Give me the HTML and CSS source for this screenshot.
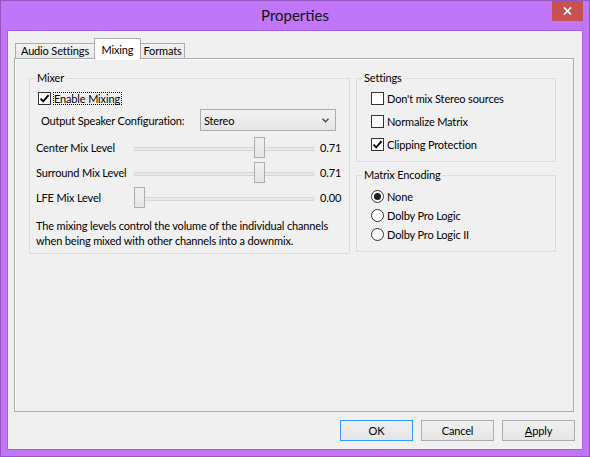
FILE: index.html
```html
<!DOCTYPE html>
<html>
<head>
<meta charset="utf-8">
<link rel="stylesheet" href="styles.css">
</head>
<body>
<div class="window">
  <div class="titlebar">
    <span></span>
    <div class="title">Properties</div>
    <div class="close">
      <svg width="9" height="8" viewBox="0 0 9 8"><path d="M1 0.5 L8 7.5 M8 0.5 L1 7.5" stroke="#fff" stroke-width="1.7" fill="none"/></svg>
    </div>
  </div>
  <div class="client">
    <div class="tabs">
      <div class="tab tab-audio">Audio Settings</div>
      <div class="tab tab-mixing selected">Mixing</div>
      <div class="tab tab-formats">Formats</div>
    </div>
    <div class="panel">
      <div class="group mixer">
        <div class="caption">Mixer</div>
        <div class="check-row enable">
          <span class="box"><svg width="11" height="11" viewBox="0 0 11 11"><path d="M1.6 5.6 L4.2 8.3 L9.6 2.2" stroke="#000" stroke-width="1.9" fill="none"/></svg></span>
          <span class="focus">Enable Mixing</span>
        </div>
        <div class="combo-row">
          <span class="combo-label">Output Speaker Configuration:</span>
          <div class="combo">
            <span>Stereo</span>
            <svg width="7" height="5" viewBox="0 0 7 5"><path d="M0.5 0.8 L3.5 3.8 L6.5 0.8" stroke="#444" stroke-width="1.3" fill="none"/></svg>
          </div>
        </div>
        <div class="slider-row first">
          <span class="slider-label">Center Mix Level</span>
          <div class="slider"><div class="track"></div><div class="thumb" style="--v:0.71"></div></div>
          <span class="value">0.71</span>
        </div>
        <div class="slider-row">
          <span class="slider-label">Surround Mix Level</span>
          <div class="slider"><div class="track"></div><div class="thumb" style="--v:0.71"></div></div>
          <span class="value">0.71</span>
        </div>
        <div class="slider-row">
          <span class="slider-label">LFE Mix Level</span>
          <div class="slider"><div class="track"></div><div class="thumb" style="--v:0"></div></div>
          <span class="value">0.00</span>
        </div>
        <p class="note">The mixing levels control the volume of the individual channels<br>when being mixed with other channels into a downmix.</p>
      </div>
      <div class="side">
        <div class="group settings">
          <div class="caption">Settings</div>
          <div class="check-row"><span class="box"></span><span>Don't mix Stereo sources</span></div>
          <div class="check-row"><span class="box"></span><span>Normalize Matrix</span></div>
          <div class="check-row"><span class="box"><svg width="11" height="11" viewBox="0 0 11 11"><path d="M1.6 5.6 L4.2 8.3 L9.6 2.2" stroke="#000" stroke-width="1.9" fill="none"/></svg></span><span>Clipping Protection</span></div>
        </div>
        <div class="group matrix">
          <div class="caption">Matrix Encoding</div>
          <div class="radio-row"><span class="radio"><span class="dot"></span></span><span>None</span></div>
          <div class="radio-row"><span class="radio"></span><span>Dolby Pro Logic</span></div>
          <div class="radio-row"><span class="radio"></span><span>Dolby Pro Logic II</span></div>
        </div>
      </div>
    </div>
    <div class="buttons">
      <div class="btn default">OK</div>
      <div class="btn">Cancel</div>
      <div class="btn"><span class="u">A</span>pply</div>
    </div>
  </div>
</div>
</body>
</html>
```
FILE: styles.css
```css
body {
  margin: 0;
  font-family: Lato, "Liberation Sans", sans-serif;
  font-size: 11px;
  letter-spacing: -0.15px;
  color: #000;
  white-space: nowrap;
}

.window {
  width: 590px;
  height: 457px;
  box-sizing: border-box;
  border: 1px solid #9556c4;
  background: #c176f9;
  display: flex;
  flex-direction: column;
}

.titlebar {
  height: 29px;
  display: grid;
  grid-template-columns: 1fr auto 1fr;
}

.title {
  font-size: 15px;
  letter-spacing: 0;
  line-height: 29px;
  color: #111;
}

.close {
  justify-self: end;
  align-self: start;
  width: 31px;
  height: 20px;
  margin-right: 6px;
  background: #c75050;
  display: flex;
  align-items: center;
  justify-content: center;
}

.client {
  flex: 1;
  margin: 0 6px 6px;
  border: 1px solid #a763dc;
  background: #f0f0f0;
  padding: 7px 7px 8px 6px;
  display: flex;
  flex-direction: column;
}

.tabs {
  display: flex;
  align-items: flex-end;
  height: 20px;
  margin-left: 1px;
}

.tab {
  box-sizing: border-box;
  height: 15px;
  border: 1px solid #acacac;
  border-bottom: 0;
  background: linear-gradient(#f2f2f2, #e8e8e8);
  text-align: center;
  line-height: 14px;
}

.tab + .tab {
  margin-left: -1px;
}

.tab-audio { width: 80px; }
.tab-mixing { width: 47px; }
.tab-formats { width: 45px; }

.tab.selected {
  height: 21px;
  margin-bottom: -1px;
  padding-top: 4px;
  background: #fff;
  position: relative;
  z-index: 1;
}

.panel {
  width: 560px;
  height: 354px;
  box-sizing: border-box;
  border: 1px solid #acacac;
  box-shadow: inset 1px 1px 0 #fff;
  padding: 19px 0 0 14px;
  display: flex;
  gap: 6px;
  align-items: flex-start;
}

.group {
  box-sizing: border-box;
  border: 1px solid #dcdcdc;
}

.caption {
  margin: -8px 0 0 5px;
  padding: 0 2px;
  width: max-content;
  background: #f0f0f0;
  line-height: 14px;
}

.mixer {
  width: 321px;
  height: 176px;
}

.check-row,
.radio-row {
  display: flex;
  align-items: center;
  height: 13px;
  line-height: 13px;
}

.box {
  width: 13px;
  height: 13px;
  box-sizing: border-box;
  border: 1px solid #333;
  background: #fff;
  margin-right: 3px;
  flex: none;
  display: flex;
  align-items: center;
  justify-content: center;
}

.enable {
  margin: 7px 0 0 8px;
}

.enable .box {
  margin-right: 2px;
}

.focus {
  border: 1px dotted #000;
  line-height: 11px;
  padding-right: 1px;
}

.combo-row {
  display: flex;
  align-items: center;
  margin: 4px 0 0 11px;
}

.combo-label {
  width: 159px;
}

.combo {
  width: 136px;
  height: 22px;
  box-sizing: border-box;
  border: 1px solid #acacac;
  background: linear-gradient(#f2f2f2, #e5e5e5);
  display: flex;
  align-items: center;
  justify-content: space-between;
  padding: 0 6px 0 3px;
}

.slider-row {
  display: flex;
  align-items: center;
  height: 21px;
  margin-top: 4px;
  padding-left: 6px;
}

.slider-row.first {
  margin-top: 6px;
}

.slider-label {
  width: 98px;
}

.slider {
  display: grid;
  width: 180px;
  height: 21px;
}

.track,
.thumb {
  grid-area: 1 / 1;
}

.track {
  align-self: start;
  height: 4px;
  margin-top: 10px;
  box-sizing: border-box;
  border: 1px solid #d6d6d6;
  background: #e7eaea;
}

.thumb {
  width: 11px;
  height: 21px;
  box-sizing: border-box;
  border: 1px solid #acacac;
  background: linear-gradient(#f0f0f0, #e5e5e5);
  margin-left: calc(var(--v) * 169px);
}

.value {
  margin-left: 6px;
}

.note {
  margin: 10px 0 0 6px;
  line-height: 15px;
}

.side {
  width: 200px;
  display: flex;
  flex-direction: column;
  gap: 13px;
}

.settings {
  height: 84px;
}

.settings .check-row {
  margin: 10px 0 0 14px;
}

.settings .caption + .check-row {
  margin-top: 7px;
}

.matrix {
  height: 77px;
}

.radio-row {
  margin: 6px 0 0 14px;
}

.matrix .caption + .radio-row {
  margin-top: 8px;
}

.radio {
  width: 13px;
  height: 13px;
  box-sizing: border-box;
  border: 1px solid #333;
  border-radius: 50%;
  background: #fff;
  margin-right: 3px;
  flex: none;
  display: flex;
  align-items: center;
  justify-content: center;
}

.dot {
  width: 7px;
  height: 7px;
  border-radius: 50%;
  background: #1e1e1e;
}

.buttons {
  display: flex;
  justify-content: flex-end;
  gap: 8px;
  margin-top: 8px;
}

.btn {
  width: 73px;
  height: 21px;
  box-sizing: border-box;
  border: 1px solid #acacac;
  background: linear-gradient(#f0f0f0, #e5e5e5);
  display: flex;
  align-items: center;
  justify-content: center;
}

.btn.default {
  border-color: #3399ff;
}

.u {
  text-decoration: underline;
}
```
